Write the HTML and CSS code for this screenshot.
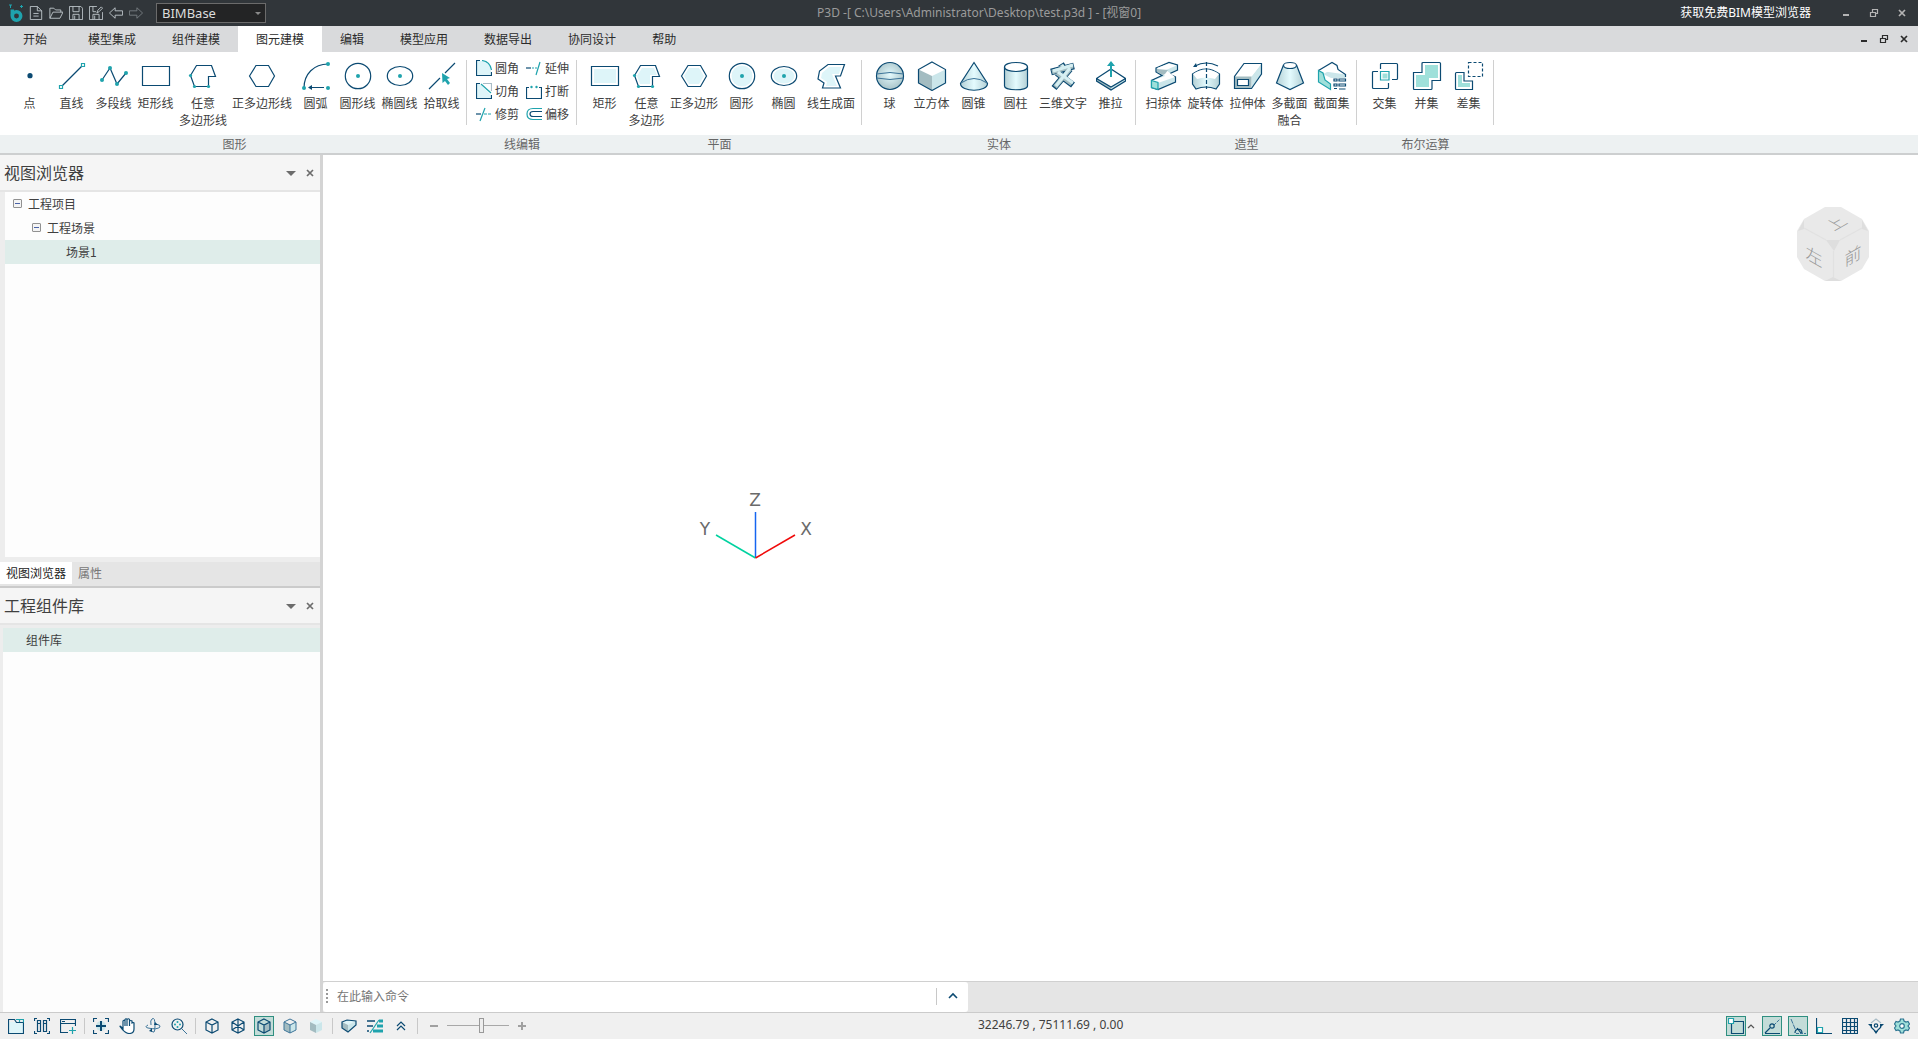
FILE: index.html
```html
<!DOCTYPE html>
<html lang="zh-CN">
<head>
    <meta charset="UTF-8">
    <meta name="viewport" content="width=device-width, initial-scale=1.0">
    <title>BIMBase</title>
    <link rel="stylesheet" href="styles.css">
</head>
<body>
    <svg class="defs" aria-hidden="true">
        <defs>
            <radialGradient id="ball" cx="50%" cy="45%" r="55%">
                <stop offset="0" stop-color="#e4fafd"/>
                <stop offset="1" stop-color="#a9c4c9"/>
            </radialGradient>
            <linearGradient id="tube">
                <stop offset="0" stop-color="#b4d0d5"/>
                <stop offset="0.5" stop-color="#e4fbfe"/>
                <stop offset="1" stop-color="#b4d0d5"/>
            </linearGradient>
        </defs>
        <symbol id="min" viewBox="0 0 10 10"><path class="fill" d="M2 6h6v2H2z"/></symbol>
        <symbol id="restore" viewBox="0 0 10 10"><path d="M1.500 4.500h5v4h-5zM3.500 4V1.500h5v4H7M1 4.500h6M3 1.500h6"/></symbol>
        <symbol id="close" viewBox="0 0 10 10"><path d="M2 2l6 6M8 2l-6 6" stroke-width="1.700"/></symbol>
        <symbol id="cube" viewBox="0 0 16 16"><path d="M8 1l6 3v8l-6 3-6-3V4zM2 4l6 3 6-3M8 7v8"/></symbol>
    </svg>

    <header class="titlebar">
        <div class="quick">
            <svg class="logo" viewBox="0 0 16 18"><circle cx="8.500" cy="12" r="4.200"/><path d="M4.300 5.500v6"/><path class="spark" d="M1 1h3M2.500 1v3M12 2.500h3M13.500 1v3"/></svg>
            <button type="button" title="新建"><svg viewBox="0 0 16 16"><path d="M1.500.5h8l5 5v10h-13zM9.500.5v5h5M5 8.500h6M5 11.500h6"/></svg></button>
            <button type="button" title="打开"><svg viewBox="0 0 16 16"><path d="M1 14V2.500h4.500l2 2h6V7M1 14l3.500-7H16l-3.500 7z"/></svg></button>
            <button type="button" title="保存"><svg viewBox="0 0 16 16"><path d="M.5.5h13l2 2v13H.5zM4.500.5v6h7v-6M4.500 15.500v-6h7v6M6.500 11v4"/></svg></button>
            <button type="button" title="另存为"><svg viewBox="0 0 16 16"><path d="M9 .5H.5v15h15V7M4.500.5v6H8M4.500 15.500v-6h7v6M6.500 11v4M9 8l1-3 4-4 1.500 1.500-4 4z"/></svg></button>
            <button type="button" title="撤销"><svg viewBox="0 0 16 16"><path d="M.5 8L7 2v3.500h8.500v5H7V14z"/></svg></button>
            <button type="button" title="重做" class="dim"><svg viewBox="0 0 16 16"><path d="M15.500 8L9 2v3.500H.5v5H9V14z"/></svg></button>
            <div class="pick">
                <select aria-label="工作空间"><option>BIMBase</option></select>
            </div>
        </div>
        <div class="title">P3D -[ C:\Users\Administrator\Desktop\test.p3d ] - [视窗0]</div>
        <a href="#" class="viewer-link">获取免费BIM模型浏览器</a>
        <div class="win-buttons">
            <button type="button" title="最小化"><svg><use href="#min"/></svg></button>
            <button type="button" title="还原"><svg><use href="#restore"/></svg></button>
            <button type="button" title="关闭"><svg><use href="#close"/></svg></button>
        </div>
    </header>

    <nav class="menu">
        <button type="button" class="first">开始</button>
        <button type="button">模型集成</button>
        <button type="button">组件建模</button>
        <button type="button" class="active">图元建模</button>
        <button type="button">编辑</button>
        <button type="button">模型应用</button>
        <button type="button">数据导出</button>
        <button type="button">协同设计</button>
        <button type="button">帮助</button>
        <div class="doc-buttons">
            <button type="button" title="最小化"><svg><use href="#min"/></svg></button>
            <button type="button" title="还原"><svg><use href="#restore"/></svg></button>
            <button type="button" title="关闭"><svg><use href="#close"/></svg></button>
        </div>
    </nav>

    <section class="ribbon">
        <div class="group">
            <div class="tools">
                <button type="button"><svg viewBox="0 0 30 30"><circle class="navy" cx="15" cy="14.700" r="2.600"/></svg>点</button>
                <button type="button"><svg viewBox="0 0 30 30"><path d="M5 25L25 5"/><path class="teal" d="M2.500 24.500h3v3h-3zM24.500 2.500h3v3h-3z"/></svg>直线</button>
                <button type="button"><svg viewBox="0 0 30 30"><path d="M3 19l8-12 7 16 9-11"/><g class="dot"><circle cx="3" cy="19" r="2"/><circle cx="11" cy="7" r="2"/><circle cx="18" cy="23" r="2"/><circle cx="27" cy="12" r="2"/></g></svg>多段线</button>
                <button type="button"><svg viewBox="0 0 30 30"><path d="M1.500 5.500h27v19h-27z"/></svg>矩形线</button>
                <button type="button"><svg viewBox="0 0 30 30"><path d="M2.500 14.500l6-10h15l4 11h-7v10H6.500z"/><g class="dot"><circle cx="2.500" cy="14.500" r="1.600"/><circle cx="6.500" cy="25.500" r="1.600"/><circle cx="20.500" cy="25.500" r="1.600"/></g></svg>任意<br>多边形线</button>
                <button type="button"><svg viewBox="0 0 30 30"><path d="M2.500 15L9 4.500h12.500L27.500 15l-6 10.500H9z"/></svg>正多边形线</button>
                <button type="button"><svg viewBox="0 0 30 30"><path d="M3 27C3 13 13 3 27 3M8 26.500h15"/><path class="navy" d="M7 26.500l4-2.500v5z"/><g class="dot"><circle cx="3" cy="27" r="2"/><circle cx="27" cy="3" r="2"/><circle cx="27" cy="27" r="2"/></g></svg>圆弧</button>
                <button type="button"><svg viewBox="0 0 30 30"><circle cx="15" cy="15" r="12.700"/><circle class="dot" cx="15" cy="15" r="2"/></svg>圆形线</button>
                <button type="button"><svg viewBox="0 0 30 30"><ellipse cx="15" cy="15" rx="12.700" ry="9.500"/><circle class="dot" cx="15" cy="15" r="2"/></svg>椭圆线</button>
                <button type="button"><svg viewBox="0 0 30 30"><path d="M2 28l11-11M18 12L28 2"/><path class="dot" d="M15 12l8 5-3 1 3 4-2 2-3-4-2.500 2z"/></svg>拾取线</button>
            </div>
            <div class="group-name">图形</div>
        </div>
        <div class="group">
            <div class="tools small">
                <button type="button"><svg viewBox="0 0 16 16"><path class="ice" d="M1 1h5q9 2 9 9v5H1z"/><path d="M4 .5H.5v15h15V12"/><path class="teal" d="M6 .5q8 1 9.500 9.500"/></svg>圆角</button>
                <button type="button"><svg viewBox="0 0 16 16"><path d="M0 8h5"/><path class="teal" d="M6 8h5" stroke-dasharray="2 1"/><path class="teal" d="M14 2l-4 13"/></svg>延伸</button>
                <button type="button"><svg viewBox="0 0 16 16"><path class="ice" d="M1 1h3l11 11v3H1z"/><path class="pale" d="M7 .5h8.500V8"/><path d="M4 .5H.5v15h15V12"/><path class="teal" d="M5 1l10 9"/></svg>切角</button>
                <button type="button"><svg viewBox="0 0 16 16"><path d="M3 4.500H.5v11h15v-11H13"/><g class="dot"><circle cx="5.500" cy="4" r="1.200"/><circle cx="10.500" cy="4" r="1.200"/></g></svg>打断</button>
                <button type="button"><svg viewBox="0 0 16 16"><path d="M0 8h5"/><path class="teal" d="M9 2L4 15"/><path class="teal" d="M8 8h8" stroke-dasharray="3 1"/></svg>修剪</button>
                <button type="button"><svg viewBox="0 0 16 16"><path class="teal" d="M16 2.500H7q-6 0-6 5.500t6 5.500h9"/><path d="M16 5.500H7Q4 5.500 4 8t3 2.500h9"/></svg>偏移</button>
            </div>
            <div class="group-name">线编辑</div>
        </div>
        <div class="group">
            <div class="tools">
                <button type="button"><svg viewBox="0 0 30 30"><path class="ice" d="M4 8h22v14H4z"/><path d="M1.500 5.500h27v19h-27z"/></svg>矩形</button>
                <button type="button"><svg viewBox="0 0 30 30"><path class="ice" d="M5 15l5-8h12l3 7h-7v9H8z"/><path d="M2.500 14.500l6-10h15l4 11h-7v10H6.500z"/><g class="dot"><circle cx="2.500" cy="14.500" r="1.600"/><circle cx="6.500" cy="25.500" r="1.600"/><circle cx="20.500" cy="25.500" r="1.600"/></g></svg>任意<br>多边形</button>
                <button type="button"><svg viewBox="0 0 30 30"><path class="ice" d="M5 15l5-8h10l5 8-5 8H10z"/><path d="M2.500 15L9 4.500h12.500L27.500 15l-6 10.500H9z"/></svg>正多边形</button>
                <button type="button"><svg viewBox="0 0 30 30"><circle class="ice" cx="15" cy="15" r="10.500"/><circle cx="15" cy="15" r="12.700"/><circle class="dot" cx="15" cy="15" r="2"/></svg>圆形</button>
                <button type="button"><svg viewBox="0 0 30 30"><ellipse class="ice" cx="15" cy="15" rx="10.500" ry="7.500"/><ellipse cx="15" cy="15" rx="12.700" ry="9.500"/><circle class="dot" cx="15" cy="15" r="2"/></svg>椭圆</button>
                <button type="button"><svg viewBox="0 0 30 30"><path class="ice" d="M13 6h12l-2 7h-7l5 12h-11l1-4-6-4 1-5z"/><path d="M12 3.500h16.500l-4 11.500h-5l5 12h-18l1.500-5-6-4 1.500-8z"/></svg>线生成面</button>
            </div>
            <div class="group-name">平面</div>
        </div>
        <div class="group">
            <div class="tools">
                <button type="button"><svg viewBox="0 0 30 30"><circle cx="15" cy="15" r="13.500" fill="url(#ball)"/><path class="thin" d="M1.500 13q13.500-3 27 0M1.500 17q13.500 3 27 0"/></svg>球</button>
                <button type="button"><svg viewBox="0 0 30 30"><path class="shade" d="M1.500 8.500L15 15v14.500l-13.500-7z"/><path class="light" d="M28.500 8.500L15 15v14.500l13.500-7z"/><path d="M15 1l13.500 7.500V22L15 29.500 1.500 22V8.500z"/></svg>立方体</button>
                <button type="button"><svg viewBox="0 0 30 30"><path d="M15 1.500l13.500 21c0 9-27 9-27 0z" fill="url(#tube)"/><path class="thin" d="M2 22q13-9 26 0"/></svg>圆锥</button>
                <button type="button"><svg viewBox="0 0 30 30"><path d="M3.500 6v19c0 5 23 5 23 0V6" fill="url(#tube)"/><path class="paper" d="M3.500 6c0 6 23 6 23 0s-23-6-23 0z"/></svg>圆柱</button>
                <button type="button"><svg viewBox="0 0 30 30"><g stroke-width="6.500"><path d="M13 3l3 5M3 11l23-6M9 12l16 12M22 8L6 27"/></g><g stroke="#a3bcc1" stroke-width="4.500"><path d="M13 4l3 4M4 11l21-6M9 12l15 11M22 8L7 26"/></g><g stroke="#d6eff2" stroke-width="3"><path d="M14 4l2 3M5 10l20-6M10 11l15 11M22 7L8 25"/></g></svg>三维文字</button>
                <button type="button"><svg viewBox="0 0 30 30"><path class="light" d="M.5 17.500L15 8l14.500 9.500V20L15 29 .5 20z"/><path class="shade" d="M.5 18L15 26v3L.5 20z"/><path class="paper" d="M.5 17.500L15 8l14.500 9.500L15 26z"/><path d="M.5 17.500V20L15 29l14.500-9v-2.500"/><path class="dot" d="M14 16V5h-3l4-5 4 5h-3v11z"/></svg>推拉</button>
            </div>
            <div class="group-name">实体</div>
        </div>
        <div class="group">
            <div class="tools">
                <button type="button"><svg viewBox="0 0 30 30"><path class="solid" d="M7 7l13-5.500 8.500 2.500v5L20 13l6.500 3v5L9 28.500l-6.500-2v-7L13 14.500 7 11z"/><path class="paper bare" d="M8 7l12-4.500 7.500 2L17 9l9 7-17 6-6-2 13-5z"/><path class="shade" d="M8 8l11 1-3 4-2 1-6-3z"/><path class="mint" d="M2.500 19.500l6.500 2v7l-6.500-2z"/></svg>扫掠体</button>
                <button type="button"><svg viewBox="0 0 30 30"><path d="M1.500 13Q15 3 28.500 13v10L25 28q-10-4-20 0l-3.500-5z" fill="url(#tube)"/><path class="paper bare" d="M2 13Q15 4 28 13l-4 5q-9-3-18 0z"/><path d="M4 5Q15-1 27 5"/><path class="navy" d="M2 6l3-4 1 4z"/><path d="M15.500 1v27" stroke-dasharray="4 2"/></svg>旋转体</button>
                <button type="button"><svg viewBox="0 0 30 30"><path class="light" d="M18.500 15.500l10-13V13L19 27.500z"/><path class="paper bare" d="M1.500 15.500l9.500-13h17.500l-10 13z"/><path class="shade" d="M1.500 15.500h17v12h-17z"/><path d="M1.500 15.500v12h17l10-14.500V2.500H11z"/><path class="paper" d="M4.500 18.500h11v6h-11z"/></svg>拉伸体</button>
                <button type="button"><svg viewBox="0 0 30 30"><path d="M8.500 4L1.500 22 15 28.500 28.500 22l-7-18" fill="url(#tube)"/><ellipse class="paper" cx="15" cy="4.500" rx="6.500" ry="3"/></svg>多截面<br>融合</button>
                <button type="button"><svg viewBox="0 0 30 30"><path class="light" d="M6 13L20 6l2 4 6.500 4V17H14z"/><path class="paper" d="M1.500 9.500L15 1.500l5 3 1 4 7.500 5"/><path class="mint" d="M1.500 9.500L6 12l2 7 5.500 4v5.500L1.500 21z"/><path d="M28.500 13v3"/><path d="M17 18h3v2h-3zM17 23h3v2h-3zM17 27.500h3M22 18h6.500v2H22zM22 23h6.500v2H22zM22 28h6.500"/></svg>截面集</button>
            </div>
            <div class="group-name">造型</div>
        </div>
        <div class="group">
            <div class="tools">
                <button type="button"><svg viewBox="0 0 30 30"><path d="M8 10.500H3.500q-1 0-1 1v15q0 1 1 1h14q1 0 1-1V22M10.500 8V3.500q0-1 1-1h15q1 0 1 1v14q0 1-1 1H22"/><path class="mint bare" d="M12.500 12.500h5v5h-5z"/><path class="teal" d="M10.500 10.500h8.500v8.500h-8.500z"/></svg>交集</button>
                <button type="button"><svg viewBox="0 0 30 30"><path d="M1.500 11.500h8.500v-9q0-1 1-1h16.500q1 0 1 1v17H20v8q0 1-1 1H2.500q-1 0-1-1z"/><path class="mint bare" d="M4 14h9V4h13v13h-9v9H4z"/></svg>并集</button>
                <button type="button"><svg viewBox="0 0 30 30"><path d="M2.500 11.500h7.500v8.500h8.500v8.500h-16q-1 0-1-1v-15q0-1 1-1z"/><path class="mint bare" d="M4 14h4v8h8v4H4z"/><path d="M14.500 1.500h14v14h-14z" stroke-dasharray="3 2"/></svg>差集</button>
            </div>
            <div class="group-name">布尔运算</div>
        </div>
    </section>

    <main class="work">
        <aside class="side">
            <section class="panel views">
                <div class="panel-head">
                    <h2>视图浏览器</h2>
                    <button type="button" title="选项"><svg viewBox="0 0 10 10"><path class="fill" d="M0 3h10L5 8z"/></svg></button>
                    <button type="button" title="关闭"><svg><use href="#close"/></svg></button>
                </div>
                <ul class="tree">
                    <li><button type="button" class="toggle" aria-label="折叠"></button>工程项目</li>
                    <li class="level2"><button type="button" class="toggle" aria-label="折叠"></button>工程场景</li>
                    <li class="level3 selected">场景1</li>
                </ul>
                <div class="panel-tabs">
                    <button type="button" class="active">视图浏览器</button>
                    <button type="button">属性</button>
                </div>
            </section>
            <section class="panel library">
                <div class="panel-head">
                    <h2>工程组件库</h2>
                    <button type="button" title="选项"><svg viewBox="0 0 10 10"><path class="fill" d="M0 3h10L5 8z"/></svg></button>
                    <button type="button" title="关闭"><svg><use href="#close"/></svg></button>
                </div>
                <ul class="tree">
                    <li class="selected">组件库</li>
                </ul>
            </section>
        </aside>

        <section class="stage">
            <div class="canvas">
                <svg class="axes" viewBox="0 0 120 80">
                    <path d="M60.500 70V24" stroke="#1565f0"/>
                    <path d="M60.500 70L21 47" stroke="#00d2a0"/>
                    <path d="M60.500 70l39.500-23" stroke="#f00a0a"/>
                    <text x="60" y="18">Z</text>
                    <text x="10" y="47">Y</text>
                    <text x="111" y="47">X</text>
                </svg>
                <svg class="viewcube" viewBox="0 0 72 74">
                    <path fill="#e9e9e9" d="M28 0h16l21 12 7 12v26l-7 12-21 12H28L7 62 0 50V24l7-12z"/>
                    <path fill="#dedede" d="M29 33h14l-6 11zM7 13v9l-6 2zM65 13v9l6 2zM28 74l8-4 8 4z"/>
                    <path fill="none" stroke="#e1e1e1" d="M7 21l22 12M65 21L43 33M36.500 44v26"/>
                    <text transform="matrix(.87 -.5 .87 .5 39 17)" y="6">上</text>
                    <text transform="translate(17 50) skewY(30)" y="6">左</text>
                    <text transform="translate(56 49) skewY(-30)" y="6">前</text>
                </svg>
            </div>
            <div class="command-row">
                <form class="command">
                    <span class="grip"></span>
                    <input type="text" placeholder="在此输入命令" aria-label="命令">
                    <button type="button" title="历史命令"><svg viewBox="0 0 10 10"><path d="M1 7l4-4 4 4"/></svg></button>
                </form>
            </div>
        </section>
    </main>

    <footer class="status">
        <div class="bar">
            <button type="button" title="工程"><svg viewBox="0 0 16 16"><path class="ice" d="M1 4h14v11H1z"/><path d="M.5 15.500V1.500h6l2 3h7v11z"/><path class="teal" d="M8 1.500h7.500v3M11.500 1v3"/></svg></button>
            <button type="button" title="窗口"><svg viewBox="0 0 16 16"><path d="M3.500 2.500h3v11h-3zM9.500 2.500h3v11h-3zM3.500 5.500h3M9.500 5.500h3M.5 3V.5H3M13 .5h2.500V3M.5 13v2.500H3M13 15.500h2.500V13"/></svg></button>
            <button type="button" title="新建窗口"><svg viewBox="0 0 16 16"><path d="M8 14.500H.5V1.500h15V8M.5 5.500h15M2 3.500h3"/><path class="teal" d="M12.500 9v7M9 12.500h7"/></svg></button>
            <i class="sep"></i>
            <button type="button" title="全图"><svg viewBox="0 0 16 16"><circle class="light" cx="8" cy="8" r="5"/><path d="M.5 4V.5H4M12 .5h3.500V4M.5 12v3.500H4M12 15.500h3.500V12"/><path d="M8 3v10M3 8h10" stroke-width="2"/></svg></button>
            <button type="button" title="平移"><svg viewBox="0 0 16 16"><path class="paper" d="M4 9V3q1-1.500 2 0v5V1.500q1-1.500 2 0V8 1.500q1.500-1.500 2.500 0V8 3q1.500-1 2.500 0V5q2-1 2 0v6q0 4.500-5 4.500-4 0-9-7Q1 7 4 11z"/></svg></button>
            <button type="button" title="旋转"><svg viewBox="0 0 16 16"><path class="thin" d="M6 12q4 6 4-4T7 1Q5 2 6 7M3 7Q-1 9 3 10q9 2 12-1 1-2-4-3"/><path class="navy" d="M4 13l3-3v4zM10 4l3 3h-4z"/></svg></button>
            <button type="button" title="缩放"><svg viewBox="0 0 16 16"><circle cx="6.500" cy="6.500" r="5.500"/><path class="thin" d="M10.500 10.500L16 16"/><g class="dot"><circle cx="6.500" cy="4" r="1"/><circle cx="4" cy="6.500" r="1"/><circle cx="9" cy="6.500" r="1"/><circle cx="6.500" cy="9" r="1"/></g></svg></button>
            <i class="sep"></i>
            <button type="button" title="消隐"><svg><use href="#cube"/></svg></button>
            <button type="button" title="线框"><svg viewBox="0 0 16 16"><path d="M8 1l6 3v8l-6 3-6-3V4zM2 4l12 8M14 4L2 12M8 1v14"/></svg></button>
            <button type="button" title="着色带边" class="on"><svg viewBox="0 0 16 16"><path class="shade" d="M8 7l6-3v8l-6 3z"/><use href="#cube"/></svg></button>
            <button type="button" title="着色"><svg viewBox="0 0 16 16"><path class="shade" d="M2 4l6 3v8l-6-3z"/><path class="light" d="M8 7l6-3v8l-6 3z"/><path class="thin" d="M8 1l6 3v8l-6 3-6-3V4zM2 4l6 3 6-3M8 7v8"/></svg></button>
            <button type="button" title="真实"><svg viewBox="0 0 16 16"><path class="ice" d="M8 1l6 3-6 3-6-3z"/><path class="shade" d="M2 4l6 3v8l-6-3z"/><path class="light" d="M8 7l6-3v8l-6 3z"/></svg></button>
            <i class="sep"></i>
            <button type="button" title="剖切"><svg viewBox="0 0 16 16"><path class="ice" d="M1 4l5-2 9 1-8 4z"/><path class="shade" d="M1 4l6 3v7l-6-4z"/><path class="light" d="M7 7l8-4v4l-8 7z"/><path d="M1 4l5-2 9 1v4l-8 7-6-4z"/></svg></button>
            <button type="button" title="线型"><svg viewBox="0 0 16 16"><path d="M0 3h8M0 8h6M0 13h2" stroke-width="1.500"/><path class="teal" d="M3 15L12 2" stroke-width="1.200"/><path class="teal" d="M12 3h4M10 8h6M6 13h10" stroke-width="3"/></svg></button>
            <button type="button" title="更多"><svg viewBox="0 0 16 16"><path d="M4 8l4-4 4 4M4 12l4-4 4 4"/></svg></button>
            <i class="sep"></i>
            <button type="button" class="grey" title="缩小"><svg viewBox="0 0 16 16"><path d="M4 8h8"/></svg></button>
            <input type="range" min="0" max="100" value="57" aria-label="缩放比例">
            <button type="button" class="grey" title="放大"><svg viewBox="0 0 16 16"><path d="M4 8h8M8 4v8"/></svg></button>
        </div>
        <output class="coords">32246.79 , 75111.69 , 0.00</output>
        <div class="bar snaps">
            <button type="button" title="捕捉" class="on"><svg viewBox="0 0 16 16"><path d="M3.500 3.500h12v12h-12z"/><path class="teal paper" d="M.5.5h5v5h-5z"/></svg></button>
            <button type="button" title="捕捉设置" class="more"><svg viewBox="0 0 8 8"><path d="M1 6l3-3 3 3"/></svg></button>
            <button type="button" title="极轴" class="on"><svg viewBox="0 0 16 16"><path d="M1 15.500h15M1 15l5-5"/><path class="thin" d="M10 7l6-6" stroke-dasharray="3 1"/><circle cx="8" cy="8" r="2.200"/></svg></button>
            <button type="button" title="追踪" class="on"><svg viewBox="0 0 16 16"><path class="thin" d="M1 1l5 12" stroke-dasharray="5 1"/><path d="M5 15c0-5 7-5 7 0M7 10l4 5"/><path class="thin" d="M6 15.500h10" stroke-dasharray="3 1"/></svg></button>
            <button type="button" title="正交"><svg viewBox="0 0 16 16"><path d="M.5 0v15.500H16"/><path class="teal paper" d="M1.500 9.500h5v5h-5z"/></svg></button>
            <button type="button" title="栅格"><svg viewBox="0 0 16 16"><path d="M.5.5h15v15H.5zM4.500 0v16M8.500 0v16M12.500 0v16M0 4.500h16M0 8.500h16M0 12.500h16"/></svg></button>
            <button type="button" title="工作平面"><svg viewBox="0 0 16 16"><path class="pale" d="M3 5l5-4 5 4"/><path d="M3 9l5 5 5-5"/><circle cx="8" cy="7.500" r="1.700"/><path class="navy" d="M0 6h4v4zM16 6h-4v4zM6 13h4l-2 3z"/></svg></button>
            <button type="button" title="设置"><svg viewBox="0 0 16 16"><path class="mint gear" d="M6.500 1h3l.5 2 2 1 2-.5L15.500 6 14 8l1.500 2-1.500 2.500-2-.5-2 1-.5 2h-3L6 13l-2-1-2 .5L.5 10 2 8 .5 6 2 3.500 4 4l2-1z"/><circle class="paper gear" cx="8" cy="8" r="2.300"/></svg></button>
        </div>
    </footer>
</body>
</html>
```
FILE: styles.css
```css
* {
    box-sizing: border-box;
}
body {
    margin: 0;
    height: 100vh;
    display: flex;
    flex-direction: column;
    overflow: hidden;
    font-family: "Noto Sans CJK SC", sans-serif;
    font-size: 12px;
    line-height: 17px;
    color: #404040;
    background: #fff;
}
button, input, select {
    margin: 0;
    padding: 0;
    border: 0;
    background: none;
    font: inherit;
    color: inherit;
}
svg {
    display: block;
    flex-shrink: 0;
    fill: none;
    stroke: #0b4a72;
    stroke-width: 1.2;
}
.defs {
    position: absolute;
    width: 0;
    height: 0;
}

/* icon colours */
.navy { fill: #0b4a72; stroke: none; }
.dot { fill: #1fa3ad; stroke: none; }
.teal { stroke: #1fa3ad; }
.pale { stroke: #a9bcc6; }
.thin { stroke: #3c7499; stroke-width: 1; }
.ice { fill: #def5f9; stroke: none; }
.light { fill: #cbe6ea; stroke: none; }
.shade { fill: #a3bcc1; stroke: none; }
.paper { fill: #fff; }
.solid { fill: #cbe6ea; }
.mint { fill: #9fe0da; stroke: #1fa3ad; }
.bare { stroke: none; }
.gear { stroke: #2d7591; }
.fill { fill: currentColor; stroke: none; }

/* title bar */
.titlebar {
    display: flex;
    align-items: center;
    height: 26px;
    background: #31363a;
    color: #9b9b9b;
}
.quick {
    display: flex;
    align-items: center;
    padding-left: 6px;
}
.quick svg {
    width: 14px;
    height: 14px;
    stroke: #c4ccd0;
    stroke-width: 1;
}
.quick button {
    display: flex;
    justify-content: center;
    width: 20px;
}
.quick .dim {
    opacity: 0.5;
}
.quick .logo {
    width: 16px;
    height: 18px;
    margin: 0 2px;
    stroke: #1fa3ad;
    stroke-width: 3.5;
}
.logo .spark {
    stroke-width: 1;
}
.pick {
    position: relative;
    margin-left: 10px;
}
.pick select {
    display: block;
    width: 110px;
    height: 20px;
    padding-left: 5px;
    border: 1px solid #6b6b6b;
    background: #232425;
    color: #dcdcdc;
    font-family: "Noto Sans", sans-serif;
    font-size: 13px;
    line-height: 17px;
    appearance: none;
}
.pick::after {
    content: "";
    position: absolute;
    right: 5px;
    top: 9px;
    border: 3px solid transparent;
    border-top-color: #8a8a8a;
    border-bottom: 0;
}
.title {
    flex: 1;
    padding: 0 0 2px 12px;
    text-align: center;
    font-family: "Noto Sans", "Noto Sans CJK SC", sans-serif;
}
.viewer-link {
    padding-bottom: 1px;
    font-family: "Noto Sans", "Noto Sans CJK SC", sans-serif;
    color: #fff;
    text-decoration: none;
}
.win-buttons, .doc-buttons {
    display: flex;
    align-items: center;
}
.win-buttons {
    padding: 0 2px 0 21px;
}
.win-buttons button {
    width: 28px;
    display: flex;
    justify-content: center;
    color: #b4b4b4;
}
.win-buttons svg, .doc-buttons svg, .panel-head svg {
    width: 10px;
    height: 10px;
    stroke: currentColor;
}

/* menu */
.menu {
    display: flex;
    height: 26px;
    background: #d9dadc;
    color: #2b2b2b;
}
.menu > button {
    padding: 0 18px 1px;
}
.menu > .first {
    padding: 0 23px 1px;
}
.menu > .active {
    background: #fff;
}
.doc-buttons {
    margin-left: auto;
    padding-right: 4px;
}
.doc-buttons button {
    display: flex;
    justify-content: center;
    width: 20px;
}

/* ribbon */
.ribbon {
    display: flex;
    height: 103px;
    padding-left: 2px;
    border-bottom: 2px solid #cdcfd0;
    background: linear-gradient(#fff 83px, #edf1f2 83px);
}
.group {
    display: flex;
    flex-direction: column;
}
.tools {
    display: flex;
    height: 65px;
    margin: 8px 0 10px;
    padding: 0 4px 0 6px;
    border-right: 1px solid #d0d0d0;
}
.tools button {
    display: flex;
    flex-direction: column;
    align-items: center;
    min-width: 42px;
    padding: 0 2px 0 3px;
    white-space: nowrap;
}
.tools:not(.small) svg {
    width: 30px;
    height: 30px;
    margin: 1px 0 3px;
}
.tools.small {
    display: grid;
    grid-template-columns: 50px 50px;
    grid-auto-rows: 23px;
    align-content: end;
    padding: 0 3px 0 6px;
}
.small button {
    flex-direction: row;
    gap: 3px;
}
.small svg {
    width: 16px;
    height: 16px;
}
.group-name {
    height: 18px;
    text-align: center;
    color: #666;
}

/* work area */
.work {
    flex: 1;
    min-height: 0;
    display: flex;
}
.side {
    display: flex;
    flex-direction: column;
    width: 323px;
    border-right: 3px solid #d4d4d4;
    background: #ededed;
}
.panel {
    display: flex;
    flex-direction: column;
}
.views {
    flex: 431;
    border-bottom: 2px solid #cbcbcb;
}
.library {
    flex: 424;
}
.panel-head {
    display: flex;
    align-items: center;
    height: 37px;
    padding: 0 1px 0 4px;
    border-bottom: 2px solid #e5e5e5;
    background: #f5f5f5;
    color: #6c6c6c;
}
.panel-head h2 {
    flex: 1;
    margin: 0;
    padding-bottom: 2px;
    font-size: 16px;
    font-weight: normal;
    line-height: 24px;
    color: #404040;
}
.panel-head button {
    display: flex;
    justify-content: center;
    width: 19px;
}
.tree {
    flex: 1;
    margin: 0 0 5px 5px;
    padding: 0;
    list-style: none;
    background: #fdfdfd;
}
.library .tree {
    margin: 3px 0 0 3px;
}
.tree li {
    display: flex;
    align-items: center;
    gap: 6px;
    height: 24px;
    padding: 0 0 1px 8px;
}
.tree .level2 {
    padding-left: 27px;
}
.tree .level3 {
    padding-left: 61px;
}
.tree .selected {
    background: #dfedea;
}
.library .tree li {
    padding-left: 23px;
}
.toggle {
    width: 9px;
    height: 9px;
    border: 1px solid #919191;
    border-radius: 1px;
    background: linear-gradient(#4b63a7, #4b63a7) center / 5px 1px no-repeat #f4f4f4;
}
.panel-tabs {
    display: flex;
    height: 24px;
    padding-bottom: 2px;
    background: #e5e5e5;
    color: #777;
}
.panel-tabs button {
    padding: 0 6px 2px;
}
.panel-tabs .active {
    background: #fff;
    color: #222;
}

/* drawing area */
.stage {
    flex: 1;
    display: flex;
    flex-direction: column;
}
.canvas {
    position: relative;
    flex: 1;
    background: #fff;
}
.axes {
    position: absolute;
    left: 372px;
    top: 333px;
    width: 120px;
    height: 80px;
    stroke-width: 1.5;
}
.axes text {
    fill: #6a6a6a;
    stroke: none;
    font-family: "DejaVu Sans", sans-serif;
    font-size: 17px;
    text-anchor: middle;
}
.viewcube {
    position: absolute;
    right: 49px;
    top: 52px;
    width: 72px;
    height: 74px;
    overflow: visible;
    stroke: none;
}
.viewcube text {
    fill: #999;
    font-size: 17px;
    font-weight: 300;
    text-anchor: middle;
}
.command-row {
    height: 31px;
    border-top: 1px solid #d0d0d0;
    background: #e5e5e5;
}
.command {
    display: flex;
    align-items: center;
    width: 645px;
    height: 30px;
    padding-bottom: 2px;
    border-radius: 3px;
    background: #fff;
}
.grip {
    width: 2px;
    height: 14px;
    margin: 0 9px 0 3px;
    background: repeating-linear-gradient(#999 0 2px, transparent 2px 4px);
}
.command input {
    flex: 1;
    height: 28px;
    padding-bottom: 1px;
    outline: 0;
}
.command input::placeholder {
    color: #757575;
}
.command button {
    display: flex;
    justify-content: center;
    width: 32px;
    height: 17px;
    align-items: center;
    border-left: 1px solid #c8c8c8;
}
.command button svg {
    width: 10px;
    height: 10px;
    stroke-width: 1.6;
}

/* status bar */
.status {
    display: flex;
    align-items: center;
    justify-content: space-between;
    height: 27px;
    padding-bottom: 1px;
    border-top: 1px solid #cbcbcb;
    background: #f0f0f0;
}
.bar {
    display: flex;
    align-items: center;
    padding: 0 3px;
}
.bar button {
    display: flex;
    align-items: center;
    justify-content: center;
    width: 20px;
    height: 20px;
    margin: 0 3px;
}
.bar svg {
    width: 16px;
    height: 16px;
}
.bar .on {
    border: 1px solid #2f8f80;
    background: #c3dcd8;
}
.bar .sep {
    width: 1px;
    height: 16px;
    margin: 0 3px;
    background: #c8c8c8;
}
.bar .grey svg {
    stroke: #a0a0a0;
    stroke-width: 2;
}
.bar input {
    width: 62px;
    height: 16px;
    appearance: none;
    background: linear-gradient(#a8a8a8, #a8a8a8) center / 100% 1px no-repeat;
}
.bar input::-webkit-slider-thumb {
    appearance: none;
    width: 5px;
    height: 15px;
    border: 1px solid #999;
    background: #eee;
}
.coords {
    flex: 1;
    padding: 0 0 3px 440px;
    font-family: "Noto Sans", sans-serif;
    white-space: nowrap;
}
.bar .more {
    width: 8px;
    margin: 0 4px 0 -2px;
}
.bar .more svg {
    width: 8px;
    height: 8px;
    stroke: #555;
}
```
